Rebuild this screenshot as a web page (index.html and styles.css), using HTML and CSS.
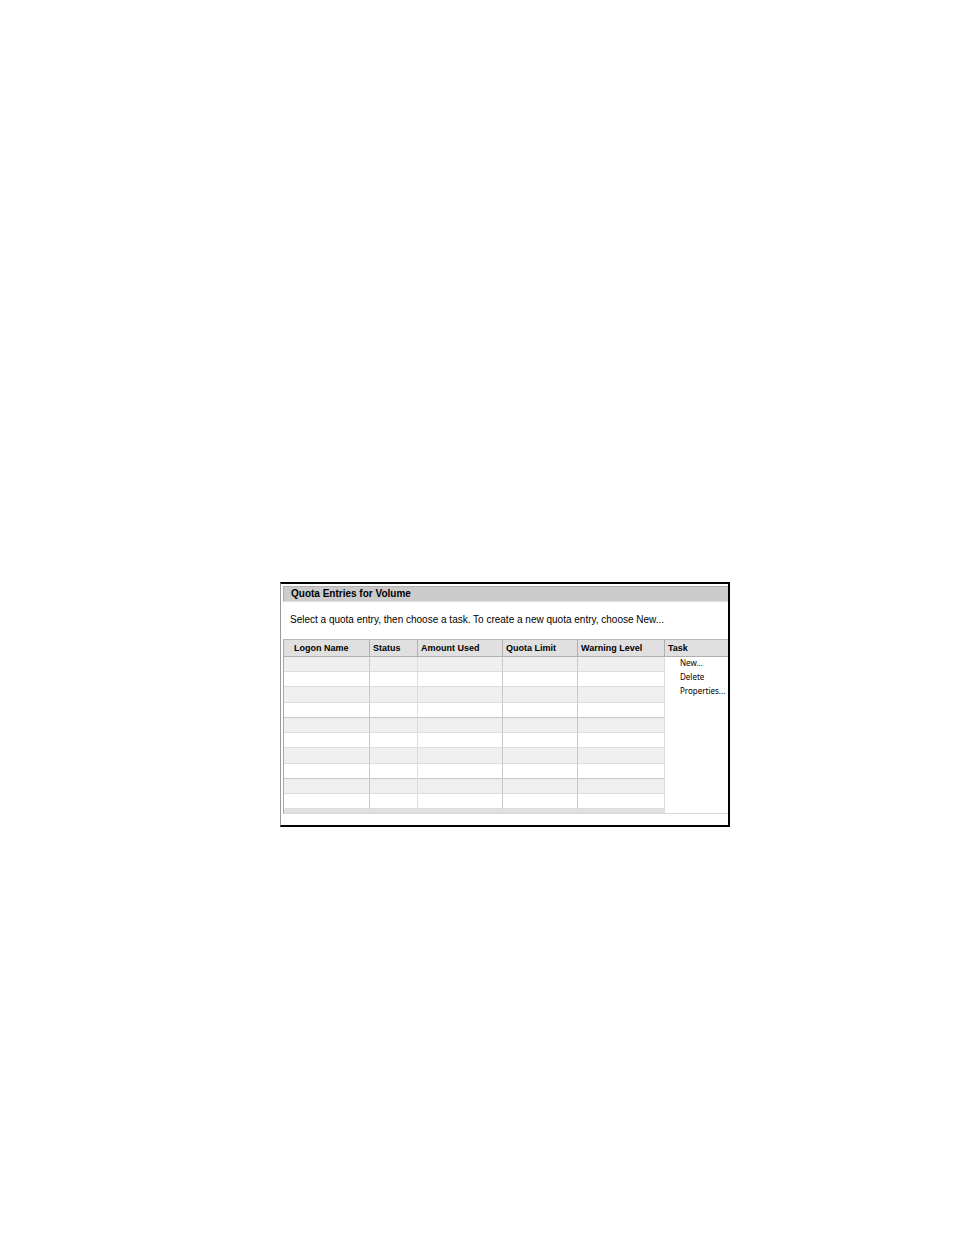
FILE: index.html
```html
<!DOCTYPE html>
<html lang="en">
<head>
<meta charset="utf-8">
<title>Quota Entries for Volume</title>
<link rel="stylesheet" href="styles.css">
</head>
<body>
<main class="window">
  <h1 class="title">Quota Entries for Volume</h1>
  <p class="intro">Select a quota entry, then choose a task. To create a new quota entry, choose New...</p>
  <div class="content">
    <table class="entries">
      <colgroup>
        <col class="col-name"><col class="col-status"><col class="col-used"><col class="col-limit"><col class="col-warning">
      </colgroup>
      <thead>
        <tr><th scope="col">Logon Name</th><th scope="col">Status</th><th scope="col">Amount Used</th><th scope="col">Quota Limit</th><th scope="col">Warning Level</th></tr>
      </thead>
      <tbody>
        <tr><td></td><td></td><td></td><td></td><td></td></tr>
        <tr><td></td><td></td><td></td><td></td><td></td></tr>
        <tr class="tall"><td></td><td></td><td></td><td></td><td></td></tr>
        <tr class="strong"><td></td><td></td><td></td><td></td><td></td></tr>
        <tr><td></td><td></td><td></td><td></td><td></td></tr>
        <tr><td></td><td></td><td></td><td></td><td></td></tr>
        <tr class="tall"><td></td><td></td><td></td><td></td><td></td></tr>
        <tr class="strong"><td></td><td></td><td></td><td></td><td></td></tr>
        <tr><td></td><td></td><td></td><td></td><td></td></tr>
        <tr><td></td><td></td><td></td><td></td><td></td></tr>
      </tbody>
      <tfoot>
        <tr><td colspan="5"></td></tr>
      </tfoot>
    </table>
    <nav class="tasks" aria-labelledby="task-heading">
      <h2 class="tasks-heading" id="task-heading">Task</h2>
      <ul class="task-list">
        <li><a href="#new">New...</a></li>
        <li><a href="#delete">Delete</a></li>
        <li><a href="#properties">Properties...</a></li>
      </ul>
    </nav>
  </div>
</main>
</body>
</html>
```
FILE: styles.css
```css
* {
  box-sizing: border-box;
}

body {
  margin: 0;
  padding: 582px 224px 24px 280px;
  background: #fff;
  color: #000;
  font-family: "Liberation Sans", Arial, sans-serif;
}

.window {
  padding: 2px 0 11px 2px;
  border: 2px solid #000;
  border-left: 1px solid #999;
}

.title {
  margin: 0;
  padding-left: 7px;
  border: 1px solid #b0b0b0;
  border-right: 0;
  border-bottom-color: #ddd;
  background: #ccc;
  font-size: 10px;
  line-height: 14px;
}

.intro {
  margin: 0;
  padding: 10px 7px 11px;
  font-size: 10px;
  line-height: 16px;
}

.content {
  display: flex;
  border-top: 1px solid #b8b8b8;
  border-bottom: 1px solid #d8d8d8;
  border-left: 1px solid #aaa;
}

.entries {
  flex: none;
  width: 381px;
  table-layout: fixed;
  border-spacing: 0;
}

.col-name { width: 86px; }
.col-status { width: 48px; }
.col-used { width: 85px; }
.col-limit { width: 75px; }
.col-warning { width: 87px; }

.entries th,
.tasks-heading {
  height: 17px;
  margin: 0;
  padding: 0 0 0 3px;
  border-bottom: 1px solid #b0b0b0;
  background: #e0e0e0;
  font-size: 9px;
  font-weight: bold;
  line-height: 16px;
  text-align: left;
  white-space: nowrap;
}

.entries th {
  border-right: 1px solid #b0b0b0;
}

.entries th:first-child {
  padding-left: 10px;
}

.entries tbody td {
  height: 15px;
  padding: 0;
  border-right: 1px solid #c8c8c8;
  border-bottom: 1px solid #ddd;
}

.entries tbody td:nth-child(2),
.entries tbody td:last-child {
  border-right-color: #ddd;
}

.entries tbody tr:nth-child(odd) {
  background: #efefef;
}

.entries tbody .tall td {
  height: 16px;
}

.entries tbody .strong td {
  border-bottom-color: #c8c8c8;
}

.entries tfoot td {
  height: 4px;
  padding: 0;
  background: #e0e0e0;
}

.tasks {
  flex: 1;
  min-width: 0;
}

.task-list {
  display: flex;
  flex-direction: column;
  gap: 2px;
  margin: 0;
  padding: 0 0 0 15px;
  list-style: none;
  font-family: "Noto Sans", sans-serif;
  font-size: 8px;
  line-height: 12px;
  white-space: nowrap;
}

.task-list a {
  color: #000;
  text-decoration: none;
}
```
